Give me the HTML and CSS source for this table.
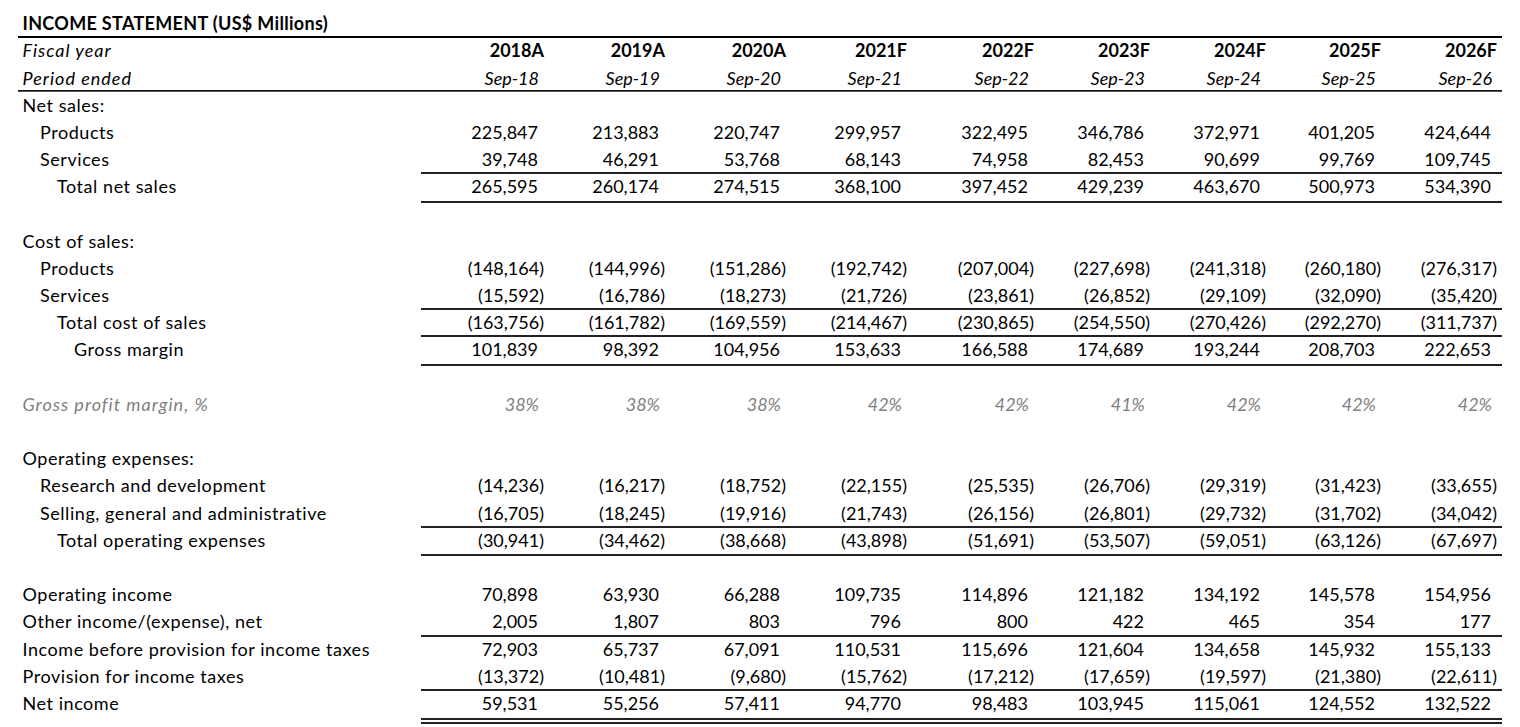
FILE: index.html
```html
<!DOCTYPE html>
<html lang="en">
<head>
<meta charset="utf-8">
<title>Income Statement</title>
<link rel="stylesheet" href="styles.css">
</head>
<body>
<main class="sheet">
  <div class="row title"><div class="lbl b">INCOME STATEMENT (US$ Millions)</div></div>
  <div class="row">
    <div class="lbl it">Fiscal year</div>
    <div class="h">2018A</div><div class="h">2019A</div><div class="h">2020A</div><div class="h">2021F</div><div class="h">2022F</div><div class="h">2023F</div><div class="h">2024F</div><div class="h">2025F</div><div class="h">2026F</div>
  </div>
  <div class="row period">
    <div class="lbl it">Period ended</div>
    <div class="d">Sep-18</div><div class="d">Sep-19</div><div class="d">Sep-20</div><div class="d">Sep-21</div><div class="d">Sep-22</div><div class="d">Sep-23</div><div class="d">Sep-24</div><div class="d">Sep-25</div><div class="d">Sep-26</div>
  </div>
  <div class="row"><div class="lbl">Net sales:</div></div>
  <div class="row">
    <div class="lbl i1">Products</div>
    <div class="n">225,847</div><div class="n">213,883</div><div class="n">220,747</div><div class="n">299,957</div><div class="n">322,495</div><div class="n">346,786</div><div class="n">372,971</div><div class="n">401,205</div><div class="n">424,644</div>
  </div>
  <div class="row">
    <div class="lbl i1">Services</div>
    <div class="n">39,748</div><div class="n">46,291</div><div class="n">53,768</div><div class="n">68,143</div><div class="n">74,958</div><div class="n">82,453</div><div class="n">90,699</div><div class="n">99,769</div><div class="n">109,745</div>
  </div>
  <div class="row tb">
    <div class="lbl i2">Total net sales</div>
    <div class="n">265,595</div><div class="n">260,174</div><div class="n">274,515</div><div class="n">368,100</div><div class="n">397,452</div><div class="n">429,239</div><div class="n">463,670</div><div class="n">500,973</div><div class="n">534,390</div>
  </div>
  <div class="row"></div>
  <div class="row"><div class="lbl">Cost of sales:</div></div>
  <div class="row">
    <div class="lbl i1">Products</div>
    <div class="n neg">(148,164)</div><div class="n neg">(144,996)</div><div class="n neg">(151,286)</div><div class="n neg">(192,742)</div><div class="n neg">(207,004)</div><div class="n neg">(227,698)</div><div class="n neg">(241,318)</div><div class="n neg">(260,180)</div><div class="n neg">(276,317)</div>
  </div>
  <div class="row">
    <div class="lbl i1">Services</div>
    <div class="n neg">(15,592)</div><div class="n neg">(16,786)</div><div class="n neg">(18,273)</div><div class="n neg">(21,726)</div><div class="n neg">(23,861)</div><div class="n neg">(26,852)</div><div class="n neg">(29,109)</div><div class="n neg">(32,090)</div><div class="n neg">(35,420)</div>
  </div>
  <div class="row t">
    <div class="lbl i2">Total cost of sales</div>
    <div class="n neg">(163,756)</div><div class="n neg">(161,782)</div><div class="n neg">(169,559)</div><div class="n neg">(214,467)</div><div class="n neg">(230,865)</div><div class="n neg">(254,550)</div><div class="n neg">(270,426)</div><div class="n neg">(292,270)</div><div class="n neg">(311,737)</div>
  </div>
  <div class="row tb">
    <div class="lbl i3">Gross margin</div>
    <div class="n">101,839</div><div class="n">98,392</div><div class="n">104,956</div><div class="n">153,633</div><div class="n">166,588</div><div class="n">174,689</div><div class="n">193,244</div><div class="n">208,703</div><div class="n">222,653</div>
  </div>
  <div class="row"></div>
  <div class="row pct">
    <div class="lbl it">Gross profit margin, %</div>
    <div class="p">38%</div><div class="p">38%</div><div class="p">38%</div><div class="p">42%</div><div class="p">42%</div><div class="p">41%</div><div class="p">42%</div><div class="p">42%</div><div class="p">42%</div>
  </div>
  <div class="row"></div>
  <div class="row"><div class="lbl">Operating expenses:</div></div>
  <div class="row">
    <div class="lbl i1">Research and development</div>
    <div class="n neg">(14,236)</div><div class="n neg">(16,217)</div><div class="n neg">(18,752)</div><div class="n neg">(22,155)</div><div class="n neg">(25,535)</div><div class="n neg">(26,706)</div><div class="n neg">(29,319)</div><div class="n neg">(31,423)</div><div class="n neg">(33,655)</div>
  </div>
  <div class="row">
    <div class="lbl i1">Selling, general and administrative</div>
    <div class="n neg">(16,705)</div><div class="n neg">(18,245)</div><div class="n neg">(19,916)</div><div class="n neg">(21,743)</div><div class="n neg">(26,156)</div><div class="n neg">(26,801)</div><div class="n neg">(29,732)</div><div class="n neg">(31,702)</div><div class="n neg">(34,042)</div>
  </div>
  <div class="row tb">
    <div class="lbl i2">Total operating expenses</div>
    <div class="n neg">(30,941)</div><div class="n neg">(34,462)</div><div class="n neg">(38,668)</div><div class="n neg">(43,898)</div><div class="n neg">(51,691)</div><div class="n neg">(53,507)</div><div class="n neg">(59,051)</div><div class="n neg">(63,126)</div><div class="n neg">(67,697)</div>
  </div>
  <div class="row"></div>
  <div class="row">
    <div class="lbl">Operating income</div>
    <div class="n">70,898</div><div class="n">63,930</div><div class="n">66,288</div><div class="n">109,735</div><div class="n">114,896</div><div class="n">121,182</div><div class="n">134,192</div><div class="n">145,578</div><div class="n">154,956</div>
  </div>
  <div class="row">
    <div class="lbl">Other income/(expense), net</div>
    <div class="n">2,005</div><div class="n">1,807</div><div class="n">803</div><div class="n">796</div><div class="n">800</div><div class="n">422</div><div class="n">465</div><div class="n">354</div><div class="n">177</div>
  </div>
  <div class="row t">
    <div class="lbl">Income before provision for income taxes</div>
    <div class="n">72,903</div><div class="n">65,737</div><div class="n">67,091</div><div class="n">110,531</div><div class="n">115,696</div><div class="n">121,604</div><div class="n">134,658</div><div class="n">145,932</div><div class="n">155,133</div>
  </div>
  <div class="row">
    <div class="lbl">Provision for income taxes</div>
    <div class="n neg">(13,372)</div><div class="n neg">(10,481)</div><div class="n neg">(9,680)</div><div class="n neg">(15,762)</div><div class="n neg">(17,212)</div><div class="n neg">(17,659)</div><div class="n neg">(19,597)</div><div class="n neg">(21,380)</div><div class="n neg">(22,611)</div>
  </div>
  <div class="row td">
    <div class="lbl">Net income</div>
    <div class="n">59,531</div><div class="n">55,256</div><div class="n">57,411</div><div class="n">94,770</div><div class="n">98,483</div><div class="n">103,945</div><div class="n">115,061</div><div class="n">124,552</div><div class="n">132,522</div>
  </div>
</main>
</body>
</html>
```
FILE: styles.css
```css
html, body {
  margin: 0;
  padding: 0;
  background: #ffffff;
}

body {
  font-family: Lato, "Liberation Sans", sans-serif;
  font-size: 18px;
  color: #000000;
}

.sheet {
  padding: 9.2px 0 4px 18px;
  width: 1484px;
}

.row {
  display: grid;
  grid-template-columns: 403px 128px 121px 121px 121px 127px 116px 116px 115px 116px;
  height: 27.2px;
}

.row > div {
  line-height: 28.4px;
  white-space: nowrap;
}

.lbl {
  padding-left: 4.5px;
  letter-spacing: 0.55px;
}

.i1 { padding-left: 22px; }
.i2 { padding-left: 39px; }
.i3 { padding-left: 56px; }

.lbl.b {
  font-weight: 700;
  letter-spacing: 0.32px;
}

.it { font-style: italic; }

.lbl.it {
  letter-spacing: 1px;
}

.title {
  box-shadow: 0 2px 0 #000000;
}

.period {
  box-shadow: inset 0 -1px 0 #111111, 0 1px 0 #555555;
}

.h {
  text-align: right;
  font-weight: 700;
  padding-right: 5px;
}

.d {
  text-align: right;
  font-style: italic;
  padding-right: 10px;
}

.n {
  text-align: right;
  padding-right: 11px;
}

.n.neg {
  padding-right: 5px;
}

.pct {
  color: #7f7f7f;
  font-style: italic;
}

.p {
  text-align: right;
  padding-right: 10px;
}

.t > .n {
  box-shadow: inset 0 2px 0 #222222;
}

.tb > .n {
  box-shadow: inset 0 2px 0 #222222, 0 2px 0 #222222;
}

.td {
  height: auto;
}

.td > div {
  height: 27.2px;
}

.td > .n {
  box-shadow: inset 0 2px 0 #222222;
  padding-bottom: 2px;
  border-bottom: 6px double #222222;
}
```
